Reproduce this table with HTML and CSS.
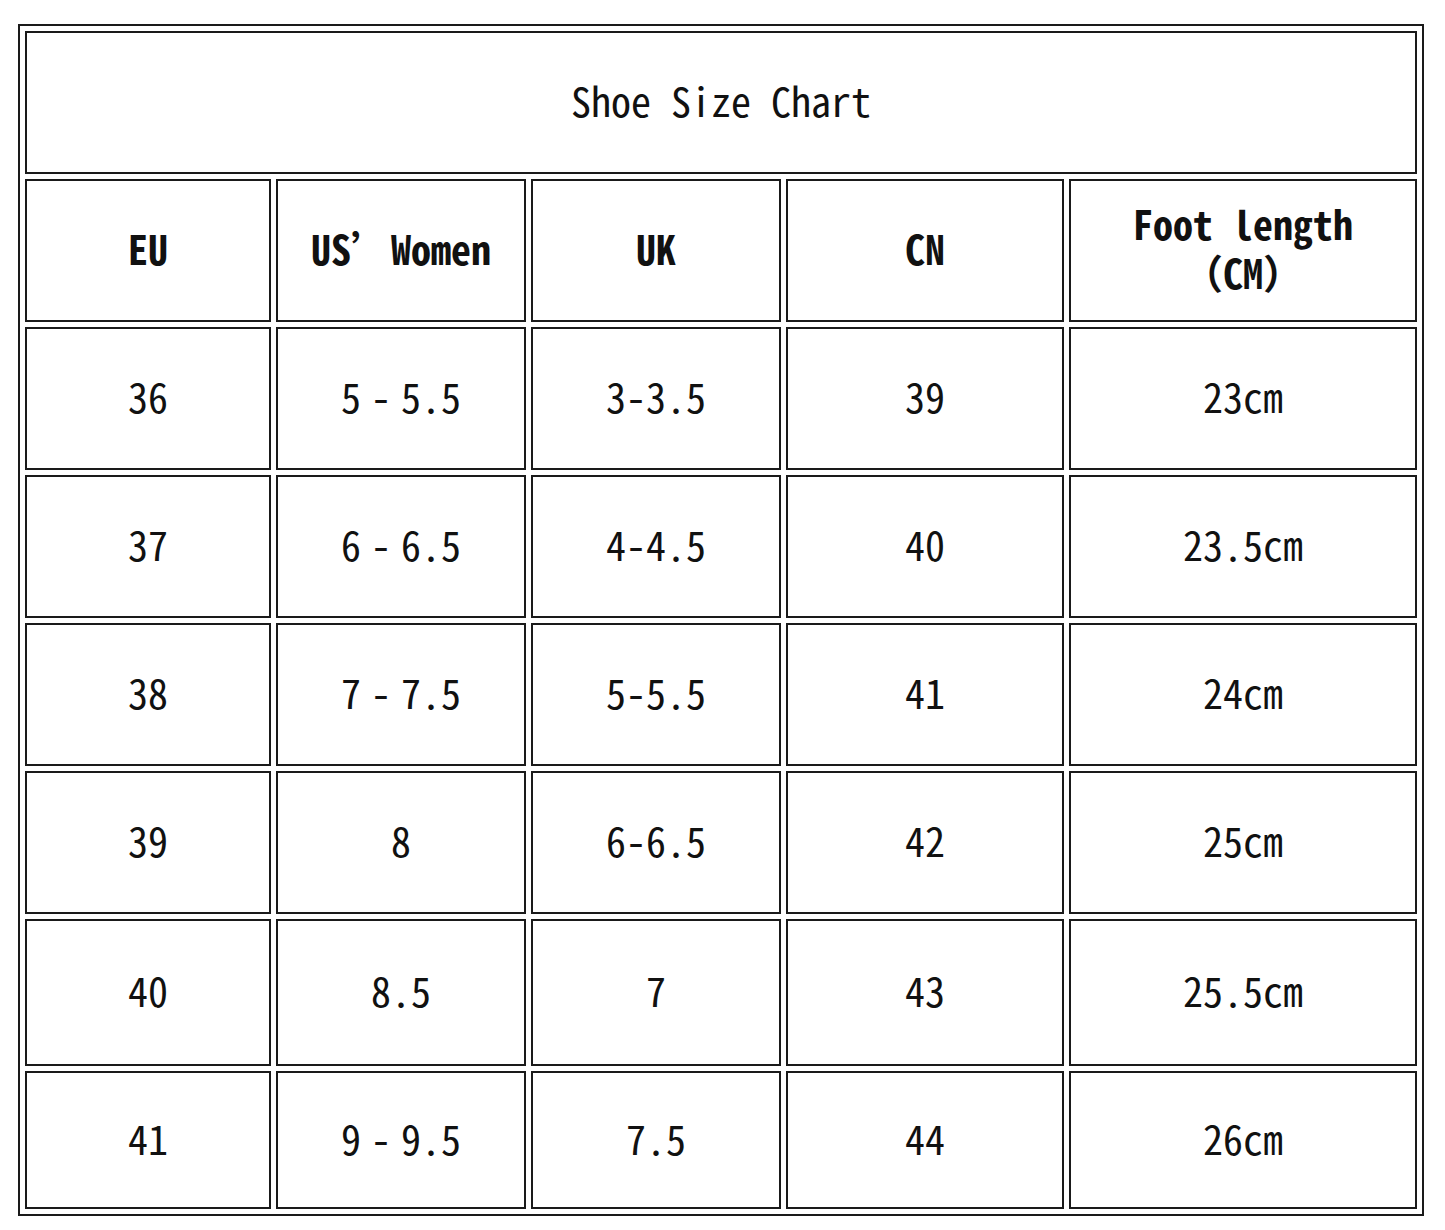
FILE: index.html
```html
<!DOCTYPE html>
<html lang="en">
<head>
<meta charset="utf-8">
<title>Shoe Size Chart</title>
<link rel="stylesheet" href="styles.css">
</head>
<body>
<table class="chart">
  <colgroup>
    <col class="c1"><col class="c2"><col class="c3"><col class="c4"><col class="c5">
  </colgroup>
  <tr class="r-title"><td colspan="5" class="title">Shoe Size Chart</td></tr>
  <tr class="r-head">
    <td class="head">EU</td>
    <td class="head">US’Women</td>
    <td class="head">UK</td>
    <td class="head">CN</td>
    <td class="head"><span class="line">Foot length</span><span class="line">（CM）</span></td>
  </tr>
  <tr class="r-std"><td>36</td><td>5<span class="dash">-</span>5.5</td><td>3-3.5</td><td>39</td><td>23cm</td></tr>
  <tr class="r-std"><td>37</td><td>6<span class="dash">-</span>6.5</td><td>4-4.5</td><td>40</td><td>23.5cm</td></tr>
  <tr class="r-std"><td>38</td><td>7<span class="dash">-</span>7.5</td><td>5-5.5</td><td>41</td><td>24cm</td></tr>
  <tr class="r-std"><td>39</td><td>8</td><td>6-6.5</td><td>42</td><td>25cm</td></tr>
  <tr class="r-tall"><td>40</td><td>8.5</td><td>7</td><td>43</td><td>25.5cm</td></tr>
  <tr class="r-last"><td>41</td><td>9<span class="dash">-</span>9.5</td><td>7.5</td><td>44</td><td>26cm</td></tr>
</table>
</body>
</html>
```
FILE: styles.css
```css
html, body {
  margin: 0;
  padding: 0;
  background: #ffffff;
}
body {
  padding: 24px 0 0 18px;
}
.chart {
  border: 2px solid #1a1a1a;
  border-collapse: separate;
  border-spacing: 5px;
  width: 1406px;
  table-layout: fixed;
  font-family: "Noto Sans Mono CJK SC", "Liberation Mono", monospace;
  font-size: 40px;
  color: #111;
}
.c1 { width: 246px; }
.c2 { width: 250px; }
.c3 { width: 250px; }
.c4 { width: 278px; }
.c5 { width: 348px; }
.chart td {
  border: 2px solid #1a1a1a;
  text-align: center;
  vertical-align: middle;
  padding: 0 0 5px 0;
  line-height: 50px;
  box-sizing: border-box;
}
.r-title td, .r-head td, .r-std td { height: 143px; }
.r-tall td { height: 147px; }
.r-last td { height: 138px; }
.title { font-weight: normal; }
.head { font-weight: bold; }
.line {
  display: block;
  line-height: 49px;
}
.dash {
  display: inline-block;
  width: 40px;
  text-align: center;
}
```
